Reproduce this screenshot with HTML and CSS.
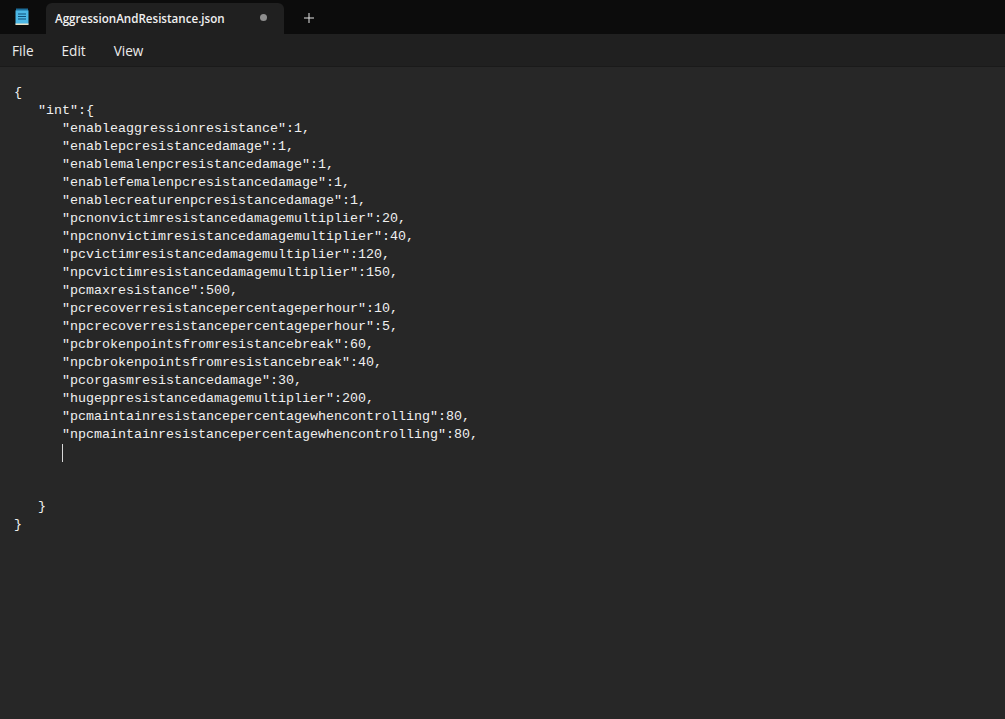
FILE: index.html
```html
<!DOCTYPE html>
<html lang="en">
     <head>
          <meta http-equiv="Content-type" content="text/html; charset=utf-8">
          <title>AggressionAndResistance.json - Notepad</title>
          <link rel="stylesheet" href="styles.css">
     </head>
     <body>
          <div class="tabbar">
               <svg class="app-icon" width="16" height="18" viewBox="0 0 16 18">
                    <rect x="1.5" y="1.5" width="13" height="15.5" rx="1.5" fill="#4cb8e6"/>
                    <rect x="1.5" y="15.5" width="13" height="1.5" fill="#e8e0c4"/>
                    <rect x="2" y="0.5" width="12" height="2" fill="#1c6f9c"/>
                    <path d="M4 6h8M4 8.5h8M4 11h8" stroke="#0f4f78" stroke-width="1.1"/>
               </svg>
               <div class="tab">
                    <span class="tab-name">AggressionAndResistance.json</span>
                    <span class="dot"></span>
               </div>
               <svg class="plus" width="12" height="12" viewBox="0 0 12 12">
                    <path d="M6 1v10M1 6h10" stroke="#e4e4e4" stroke-width="1"/>
               </svg>
          </div>
          <div class="menubar">
               <span class="menu-item">File</span>
               <span class="menu-item">Edit</span>
               <span class="menu-item">View</span>
          </div>
<pre class="editor">{
   "int":{
      "enableaggressionresistance":1,
      "enablepcresistancedamage":1,
      "enablemalenpcresistancedamage":1,
      "enablefemalenpcresistancedamage":1,
      "enablecreaturenpcresistancedamage":1,
      "pcnonvictimresistancedamagemultiplier":20,
      "npcnonvictimresistancedamagemultiplier":40,
      "pcvictimresistancedamagemultiplier":120,
      "npcvictimresistancedamagemultiplier":150,
      "pcmaxresistance":500,
      "pcrecoverresistancepercentageperhour":10,
      "npcrecoverresistancepercentageperhour":5,
      "pcbrokenpointsfromresistancebreak":60,
      "npcbrokenpointsfromresistancebreak":40,
      "pcorgasmresistancedamage":30,
      "hugeppresistancedamagemultiplier":200,
      "pcmaintainresistancepercentagewhencontrolling":80,
      "npcmaintainresistancepercentagewhencontrolling":80,
      <span class="caret"></span>


   }
}</pre>
     </body>
</html>
```

FILE: styles.css
```css
html{
     height: 100%;
}
body{
     padding: 0;
     margin: 0;
     height: 100%;
     display: flex;
     flex-direction: column;
     background-color: #272727;
     color: #f2f2f2;
     font-family: "Open Sans", "Liberation Sans", sans-serif;
     overflow: hidden;
}
.tabbar{
     height: 34px;
     flex-shrink: 0;
     display: flex;
     align-items: flex-end;
     background-color: #0c0c0c;
}
.app-icon{
     margin: 0 0 8px 14px;
}
.tab{
     width: 238px;
     height: 31px;
     margin-left: 16px;
     padding: 0 17px 0 9px;
     box-sizing: border-box;
     display: flex;
     align-items: center;
     justify-content: space-between;
     background-color: #202020;
     border-radius: 6px 6px 0 0;
}
.tab-name{
     font-size: 11.6px;
     font-weight: 600;
     color: #f0f0f0;
}
.dot{
     width: 7px;
     height: 7px;
     margin-bottom: 2px;
     border-radius: 50%;
     background-color: #8e8e8e;
}
.plus{
     margin: 0 0 10px 19px;
}
.menubar{
     height: 33px;
     flex-shrink: 0;
     display: flex;
     align-items: center;
     gap: 28px;
     padding: 1px 0 0 12px;
     box-sizing: border-box;
     background-color: #202020;
     border-bottom: 1px solid #1a1a1a;
}
.menu-item{
     font-size: 13.6px;
     color: #ececec;
}
.editor{
     margin: 0;
     padding: 17px 14px 0;
     flex-grow: 1;
     font-family: "Liberation Mono", "DejaVu Sans Mono", monospace;
     font-size: 13.33px;
     line-height: 18px;
     color: #f0f0f0;
}
.caret{
     display: inline-block;
     height: 18px;
     vertical-align: top;
     border-left: 1px solid #d8d8d8;
}
```
